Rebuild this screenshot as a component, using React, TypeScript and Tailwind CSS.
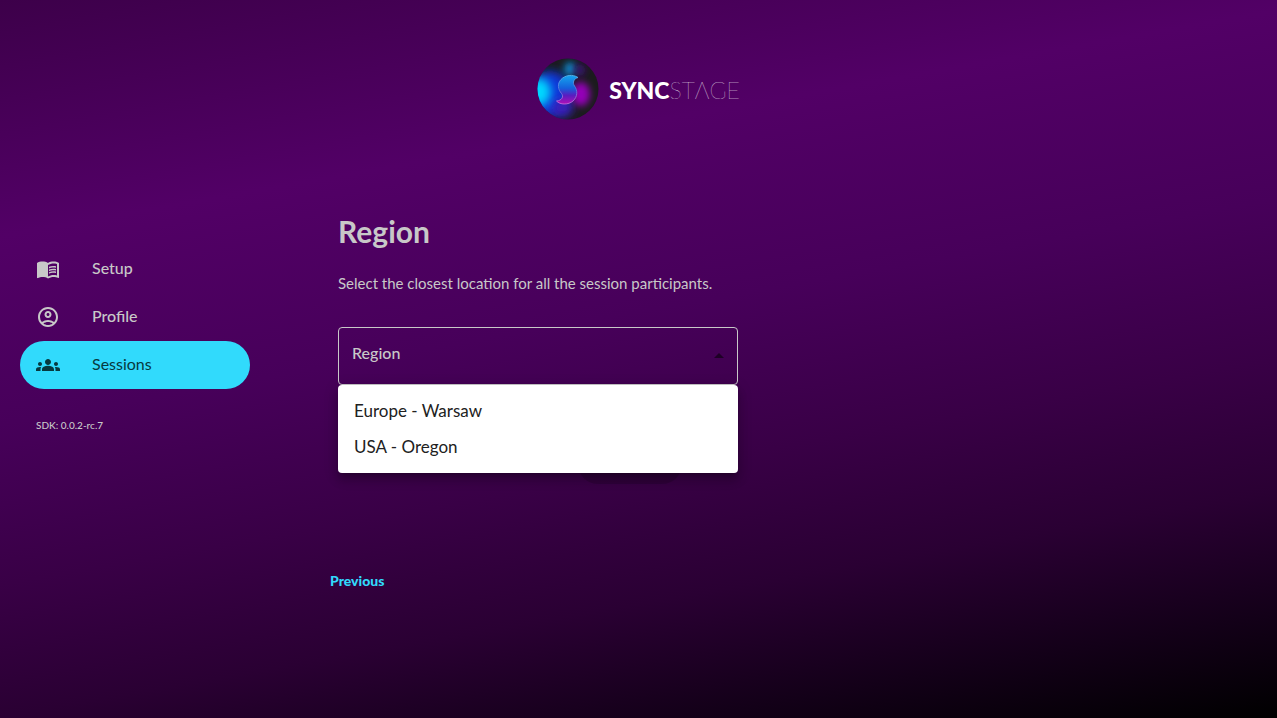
import { useState } from "react";
import type { MouseEvent } from "react";
import { MdGroups, MdMenuBook, MdOutlineAccountCircle } from "react-icons/md";

const regions = ["Europe - Warsaw", "USA - Oregon"];

const navItems = [
  { label: "Setup", Icon: MdMenuBook, active: false },
  { label: "Profile", Icon: MdOutlineAccountCircle, active: false },
  { label: "Sessions", Icon: MdGroups, active: true },
];

function Logo() {
  return (
    <div className="flex items-center gap-2.5">
      <svg viewBox="0 0 62 62" className="size-[62px]" aria-hidden="true">
        <defs>
          <clipPath id="disc">
            <circle cx="31" cy="31" r="30.5" />
          </clipPath>
          <filter id="soft" x="-50%" y="-50%" width="200%" height="200%">
            <feGaussianBlur stdDeviation="5" />
          </filter>
          <filter id="softer" x="-100%" y="-100%" width="300%" height="300%">
            <feGaussianBlur stdDeviation="3.5" />
          </filter>
          <linearGradient id="mark" x1="0.5" y1="0" x2="0.5" y2="1">
            <stop offset="0" stopColor="#14a5ee" />
            <stop offset="0.45" stopColor="#1560dc" />
            <stop offset="0.7" stopColor="#5a1cc0" />
            <stop offset="1" stopColor="#b010b8" />
          </linearGradient>
          <linearGradient id="rim" x1="0.5" y1="0" x2="0.5" y2="1">
            <stop offset="0" stopColor="#55b5ee" />
            <stop offset="0.5" stopColor="#5a78de" />
            <stop offset="1" stopColor="#c86ad8" />
          </linearGradient>
        </defs>
        <g clipPath="url(#disc)">
          <rect width="62" height="62" fill="#1b1b1d" />
          <ellipse cx="13" cy="36" rx="21" ry="23" fill="#1035d8" filter="url(#soft)" />
          <ellipse cx="25" cy="50" rx="11" ry="9" fill="#3a1cb8" filter="url(#soft)" />
          <ellipse cx="2" cy="34" rx="12" ry="14" fill="#00d8ff" filter="url(#soft)" />
          <ellipse cx="33" cy="11" rx="6" ry="7" fill="#0b84c8" filter="url(#softer)" />
          <ellipse cx="43" cy="12" rx="5" ry="6" fill="#3a1075" filter="url(#softer)" />
          <ellipse cx="44" cy="36" rx="9" ry="12" fill="#9400b8" filter="url(#softer)" />
          <path
            d="M41 19.500C36 16 28 17 24 21.500C20 26 21 31.500 24.500 35.500C27 38.500 25 42.500 19.500 43C23 47 31.500 47 36 43C41 38.500 40.500 32 37.500 28C35 24.500 37 20.500 41 19.500Z"
            fill="url(#mark)"
            stroke="url(#rim)"
            strokeWidth="0.9"
            strokeLinejoin="round"
          />
        </g>
      </svg>
      <span className="pt-0.5 font-[Lato] text-[23px] leading-8 text-white">
        <span className="font-black">SYNC</span>
        <span className="font-thin">STΛGE</span>
      </span>
    </div>
  );
}

export default function App() {
  const [open, setOpen] = useState(true);
  const [region, setRegion] = useState("");

  const toggle = (event: MouseEvent) => {
    event.preventDefault();
    setOpen(!open);
  };

  const choose = (name: string) => {
    setRegion(name);
    setOpen(false);
  };

  return (
    <div className="min-h-screen bg-[linear-gradient(170deg,#3d004a_0%,#520066_25%,#47005a_45%,#390046_62%,#2a0033_76%,#130018_89%,#000000_100%)] font-[Lato,sans-serif] text-[#c8c8c8]">
      <header className="flex justify-center pt-[58px]">
        <Logo />
      </header>

      <div className="flex pt-24">
        <aside className="w-[338px] shrink-0 px-5 pt-[29px]">
          <nav className="w-[230px]">
            {navItems.map(({ label, Icon, active }) => (
              <a
                key={label}
                href={`#${label.toLowerCase()}`}
                aria-current={active ? "page" : undefined}
                className={
                  active
                    ? "flex h-12 items-center gap-8 rounded-full bg-[#31dafc] px-4 text-base text-[#07393f]"
                    : "flex h-12 items-center gap-8 rounded-full px-4 text-base font-medium"
                }
              >
                <Icon className="size-6" />
                <span className="pb-0.5">{label}</span>
              </a>
            ))}
          </nav>
          <p className="px-4 pt-7 text-[10px] leading-4 font-medium">SDK: 0.0.2-rc.7</p>
        </aside>

        <main className="w-[400px]">
          <h1 className="text-[30px] leading-[30px] font-bold">Region</h1>
          <p className="pt-[26px] text-[15px] leading-[22px]">
            Select the closest location for all the session participants.
          </p>

          <div className="relative mt-[33px]">
            {region === "" && (
              <label
                htmlFor="region"
                className="pointer-events-none absolute top-3.5 left-3.5 text-base leading-6 font-medium"
              >
                Region
              </label>
            )}
            <select
              id="region"
              aria-label="Region"
              value={region}
              onMouseDown={toggle}
              onChange={(event) => choose(event.target.value)}
              className="block h-[58px] w-full appearance-none rounded border border-[#c8c8c8] bg-transparent px-[13px] pb-1 text-base font-medium text-[#c8c8c8] outline-none"
            >
              <option value="" />
              {regions.map((name) => (
                <option key={name}>{name}</option>
              ))}
            </select>
            <svg
              viewBox="0 0 10 5"
              className="pointer-events-none absolute top-[26px] right-3.5 h-[5px] w-2.5 fill-[#1e0026]"
              aria-hidden="true"
            >
              <path d="M0 5L5 0L10 5Z" />
            </svg>
            {open && (
              <ul className="absolute top-full z-10 w-full rounded bg-white py-2 text-[#212121] shadow-[0_5px_5px_-3px_rgba(0,0,0,0.2),0_8px_10px_1px_rgba(0,0,0,0.14),0_3px_14px_2px_rgba(0,0,0,0.12)]">
                {regions.map((name) => (
                  <li key={name}>
                    <button
                      type="button"
                      onClick={() => choose(name)}
                      className="block h-9 w-full px-4 text-left text-[17px] leading-6"
                    >
                      {name}
                    </button>
                  </li>
                ))}
              </ul>
            )}
          </div>

          <div className="flex justify-center pt-[59px] pl-[184px]">
            <button
              type="button"
              disabled
              aria-label="Next"
              className="h-10 w-26 rounded-full bg-black/15"
            />
          </div>

          <button
            type="button"
            className="mt-[85px] -ml-2 text-sm leading-6 font-black text-[#31dafc]"
          >
            Previous
          </button>
        </main>
      </div>
    </div>
  );
}
